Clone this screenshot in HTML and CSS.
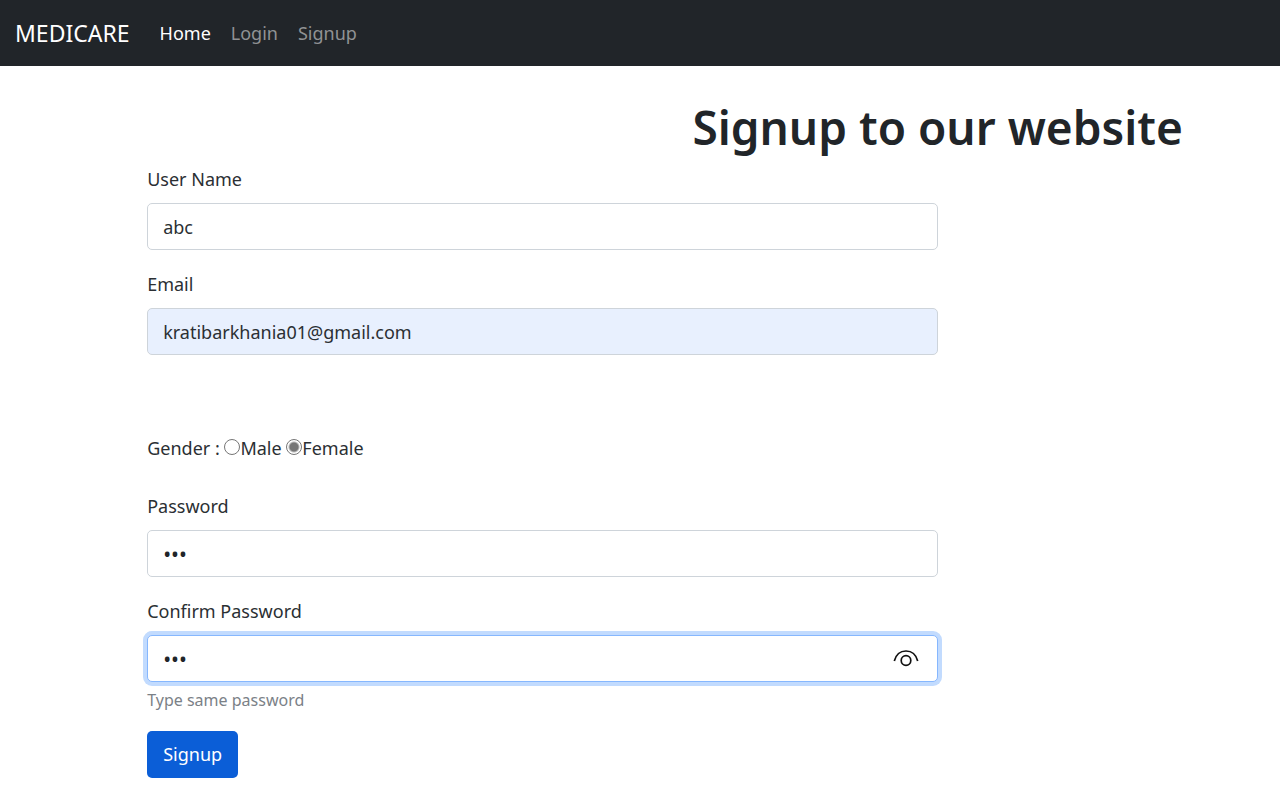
FILE: index.html
```html
<!DOCTYPE html>
<html lang="en">
<head>
<meta charset="utf-8">
<meta name="viewport" content="width=device-width, initial-scale=1">
<title>Signup</title>
<link rel="stylesheet" href="styles.css">
</head>
<body>
<nav class="navbar">
  <a class="brand" href="#">MEDICARE</a>
  <a class="nav-link active" href="#">Home</a>
  <a class="nav-link" href="#">Login</a>
  <a class="nav-link" href="#">Signup</a>
</nav>
<main>
  <h1 class="title">Signup to our website</h1>
  <form class="form">
    <div class="field">
      <label for="username">User Name</label>
      <input class="control" id="username" type="text" value="abc">
    </div>
    <div class="field">
      <label for="email">Email</label>
      <input class="control filled" id="email" type="email" value="kratibarkhania01@gmail.com">
    </div>
    <div class="gender">
      <span>Gender :</span>
      <input class="radio" type="radio" name="gender" id="male"><label for="male">Male</label>
      <input class="radio" type="radio" name="gender" id="female" checked><label for="female">Female</label>
    </div>
    <div class="field">
      <label for="password">Password</label>
      <input class="control secret" id="password" type="password" value="abc">
    </div>
    <div class="field">
      <label for="confirm">Confirm Password</label>
      <div class="reveal-wrap">
        <input class="control secret focused" id="confirm" type="password" value="abc" aria-describedby="help">
        <button class="reveal" type="button" aria-label="Show password">
          <svg width="26" height="18" viewBox="0 0 26 18" fill="none" stroke="#111" stroke-width="1.7"><path d="M1.3 11C3 4.500 7.500 1 13 1S23 4.500 24.700 11"/><circle cx="13" cy="10.500" r="4.800"/></svg>
        </button>
      </div>
      <div class="help" id="help">Type same password</div>
    </div>
    <button class="submit" type="submit">Signup</button>
  </form>
</main>
</body>
</html>
```
FILE: styles.css
```css
* { box-sizing: border-box; }
body {
  margin: 0;
  background: #fff;
  color: #2b2f33;
  font-family: "Noto Sans", "Open Sans", sans-serif;
  font-size: 18px;
  line-height: 29px;
}
.navbar {
  display: flex;
  align-items: center;
  height: 66px;
  padding: 0 15px;
  gap: 20px;
  background: #212529;
}
.brand {
  margin-right: 10px;
  color: #fff;
  font-size: 23px;
  text-decoration: none;
}
.nav-link { color: #909294; text-decoration: none; }
.nav-link.active { color: #fff; }
.title {
  margin: 32px 0 9px 46.5%;
  color: #212529;
  text-align: center;
  font-size: 46px;
  font-weight: 600;
  line-height: 58px;
}
.form {
  display: flex;
  flex-direction: column;
  align-items: flex-start;
  width: 61.8%;
  margin-left: 11.5%;
}
.field { width: 100%; margin-bottom: 20px; }
.field label { display: block; margin-bottom: 9px; }
.control {
  display: block;
  width: 100%;
  height: 47px;
  padding: 0 15px;
  border: 1px solid #ced4da;
  border-radius: 5px;
  background: #fff;
  color: #2b2f33;
  font: inherit;
  outline: 0;
}
.filled { background: #e8f0fe; }
.secret { color: #212529; font-size: 21px; }
.focused {
  border-color: #86b7fe;
  box-shadow: 0 0 0 4px #c2dbfe;
}
.gender { margin: 59px 0 29px; }
.radio {
  appearance: none;
  width: 16px;
  height: 16px;
  margin: 0;
  border: 1px solid #767676;
  border-radius: 50%;
  background: #fff;
}
.radio:checked { background: radial-gradient(circle, #767676 4px, #fff 6px); }
.reveal-wrap { position: relative; }
.reveal {
  position: absolute;
  top: 0;
  right: 19px;
  display: flex;
  align-items: center;
  height: 100%;
  padding: 0;
  border: 0;
  background: none;
}
.help {
  margin-top: 5px;
  margin-bottom: -2px;
  color: #7b8187;
  font-size: 16px;
  line-height: 26px;
}
.submit {
  height: 47px;
  padding: 0 16px;
  border: 0;
  border-radius: 5px;
  background: #0b5ed7;
  color: #fff;
  font: inherit;
}
```
